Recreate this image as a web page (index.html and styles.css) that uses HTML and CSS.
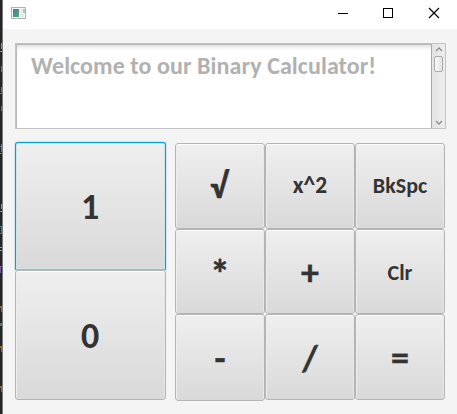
FILE: index.html
```html
<!DOCTYPE html>
<html lang="en">
<head>
<meta charset="utf-8">
<title>Binary Calculator</title>
<link rel="stylesheet" href="styles.css">
</head>
<body>
<div class="backdrop">
  <svg width="3" height="414" shape-rendering="crispEdges">
    <g fill="#7a9cac"><path d="M1 43h1v6h-1zM0 51h2v1H0zM1 204h1v5h-1zM0 211h2v1H0zM0 247h2v1H0zM0 250h2v1H0z"/></g>
    <g fill="#805a9c"><path d="M1 66h1v6h-1zM1 106h1v5h-1zM0 266h2v1H0zM0 267h1v6H0z"/></g>
    <g fill="#5c7cac"><path d="M1 87h1v5h-1zM0 93h2v1H0zM0 146h2v1H0zM1 144h1v8h-1zM0 153h2v1H0z"/></g>
    <g fill="#3f79b4"><path d="M0 226h2v1H0zM1 227h1v6h-1zM0 233h2v1H0z"/></g>
    <g fill="#9b691f"><path d="M0 306h2v2H0zM1 308h1v4h-1zM0 346h2v2H0zM1 348h1v4h-1zM0 386h2v2H0zM1 388h1v4h-1z"/></g>
    <path fill="#4b8069" d="M0 323h2v3H0z"/>
  </svg>
</div>
<div class="window">
  <header class="titlebar">
    <svg class="app-icon" width="15" height="12" viewBox="0 0 15 12">
      <defs><linearGradient id="ic" x1="0" y1="0" x2="1" y2="1"><stop offset="0" stop-color="#4579a0"/><stop offset="1" stop-color="#4faa7a"/></linearGradient></defs>
      <path fill="#f5f5f5" stroke="#adb2b7" d="M.5.5h14v11H.5z"/>
      <path fill="url(#ic)" d="M2 2h6v8H2z"/>
      <path fill="#e7e7e7" d="M9 2h3v4H9zM9 7h4v3H9z"/>
      <path fill="#58a291" d="M12.500 2h1v4h-1z"/>
    </svg>
    <svg class="controls" width="108" height="12" viewBox="0 0 108 12" fill="none" stroke="#000">
      <path d="M1 6.500h10M46.500 1.500h9v9h-9z" shape-rendering="crispEdges"/>
      <path d="M92 1l10 10M102 1L92 11" stroke-width="1.200"/>
    </svg>
  </header>
  <main class="content">
    <section class="display">
      <div class="message"><span>Welcome to our Binary Calculator!</span></div>
      <div class="scrollbar">
        <svg width="8" height="5" viewBox="0 0 8 5"><path d="M1 4l3-3 3 3" fill="none" stroke="#8c8c8c" stroke-width="1.300"/></svg>
        <div class="thumb"></div>
        <svg width="8" height="5" viewBox="0 0 8 5"><path d="M1 1l3 3 3-3" fill="none" stroke="#8c8c8c" stroke-width="1.300"/></svg>
      </div>
    </section>
    <section class="keys">
      <div class="digits">
        <button class="key big focused"><span>1</span></button>
        <button class="key big"><span>0</span></button>
      </div>
      <div class="operators">
        <button class="key sqrt"><span>√</span></button>
        <button class="key square"><span>x^2</span></button>
        <button class="key back"><span>BkSpc</span></button>
        <button class="key times"><span>*</span></button>
        <button class="key plus"><span>+</span></button>
        <button class="key clear"><span>Clr</span></button>
        <button class="key minus"><span>-</span></button>
        <button class="key divide"><span>/</span></button>
        <button class="key equals"><span>=</span></button>
      </div>
    </section>
  </main>
</div>
</body>
</html>
```
FILE: styles.css
```css
* { box-sizing: border-box; }
body {
  margin: 0;
  width: 457px;
  height: 414px;
  display: flex;
  overflow: hidden;
  font-family: Carlito, Lato, sans-serif;
  font-weight: 700;
  color: #333;
}
.backdrop {
  width: 3px;
  background: #252427;
  border-right: 1px solid #77777a;
  overflow: hidden;
}
.backdrop svg { display: block; }
.window { flex: 1; background: #f4f4f4; }
.titlebar {
  height: 29px;
  padding: 0 12px 3px 8px;
  background: #fff;
  display: flex;
  justify-content: space-between;
  align-items: center;
}
.content { padding: 14px 11px 0 12px; }
.display {
  height: 86px;
  width: 431px;
  border: 1px solid #c2c2c2;
  display: flex;
  background: #fff;
}
.message {
  flex: 1;
  padding: 8px 0 0 14px;
  border: 1px solid #b9b9b9;
  border-right-color: #aaa;
  border-bottom: 0;
  box-shadow: inset 0 4px 4px -2px #ddd;
  font-size: 24px;
  letter-spacing: 0.08px;
  line-height: 26px;
  color: #b1b1b1;
  white-space: nowrap;
}
.scrollbar {
  width: 13px;
  padding: 3px 0;
  background: linear-gradient(90deg, #e3e3e3, #ededed);
  display: flex;
  flex-direction: column;
  align-items: center;
}
.thumb {
  width: 9px;
  height: 16px;
  margin: 4px 0 auto;
  border: 1px solid #aaa;
  border-radius: 2px;
  background: linear-gradient(90deg, #fafafa, #e2e2e2);
}
.keys { display: flex; gap: 9px; padding-top: 13px; }
.digits {
  width: 151px;
  display: grid;
  grid-template-rows: 128px 130px;
}
.operators {
  width: 270px;
  padding-top: 1px;
  display: grid;
  grid-template-columns: 90px 90px 90px;
  grid-template-rows: 86px 85px 87px;
}
.key {
  margin: 0;
  padding: 0;
  min-width: 0;
  border: 1px solid #b4b4b4;
  border-radius: 3px;
  background: linear-gradient(#efefef, #d9d9d9);
  box-shadow: inset 0 1px #fcfcfc, inset 1px 0 #eee, inset -1px 0 #e8e8e8;
  font: inherit;
  font-size: 36px;
  line-height: 1;
  color: inherit;
}
.key span { display: block; }
.big span { padding: 2px 1px 0 0; }
.focused {
  border-color: #039ed3;
  border-bottom-color: #b4b4b4;
  border-radius: 3px 3px 0 0;
  box-shadow: inset 0 0 0 1px #cde3ea, 0 0 1px 1px #cdeaf4;
}
.sqrt, .times, .plus, .minus, .divide, .equals { -webkit-text-stroke: 0.4px #333; }
.sqrt span { padding-right: 2px; }
.times { font-size: 40px; }
.times span { padding-top: 7px; }
.plus span, .minus span, .clear span { padding-top: 2px; }
.divide span { padding-top: 3px; }
.equals span { padding-top: 2px; }
.divide, .equals { margin-bottom: 1px; }
.square { font-size: 23.500px; }
.back, .clear { font-size: 22px; }
```
